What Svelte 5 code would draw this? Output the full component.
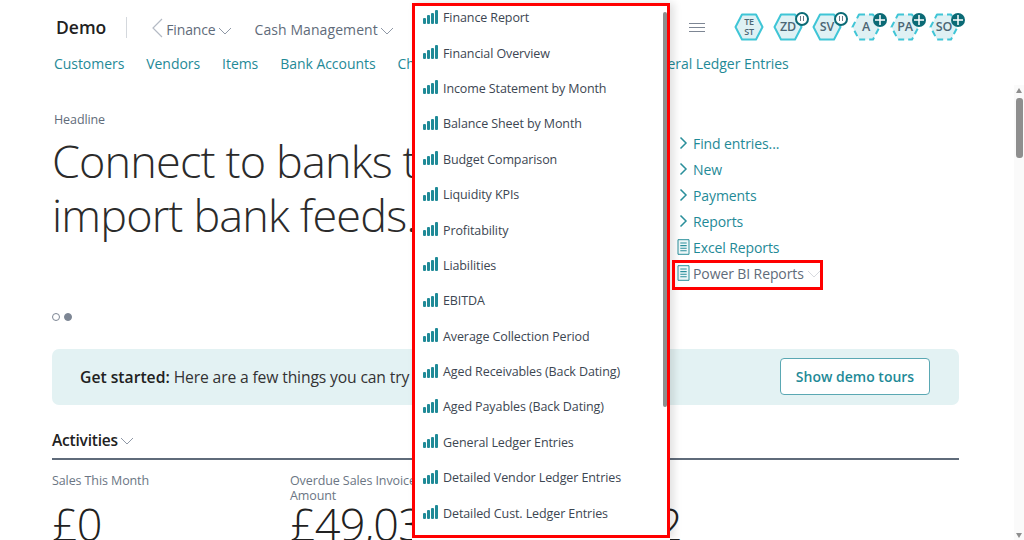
<script>
  const reports = [
    'Finance Report', 'Financial Overview', 'Income Statement by Month', 'Balance Sheet by Month',
    'Budget Comparison', 'Liquidity KPIs', 'Profitability', 'Liabilities', 'EBITDA',
    'Average Collection Period', 'Aged Receivables (Back Dating)', 'Aged Payables (Back Dating)',
    'General Ledger Entries', 'Detailed Vendor Ledger Entries', 'Detailed Cust. Ledger Entries'
  ];
  const links = ['Customers', 'Vendors', 'Items', 'Bank Accounts', 'Chart of Accounts', 'Cost Centres', 'General Ledger Entries'];
  const expanders = ['Find entries...', 'New', 'Payments', 'Reports'];
  const people = [
    { label: 'TE', label2: 'ST', kind: 'plain' },
    { label: 'ZD', kind: 'pause' },
    { label: 'SV', kind: 'pause' },
    { label: 'A', kind: 'add' },
    { label: 'PA', kind: 'add' },
    { label: 'SO', kind: 'add' }
  ];
</script>

{#snippet doc()}
  <svg class="doc" width="13" height="16" viewBox="0 0 13 16" aria-hidden="true">
    <path d="M1 .7h11v14.600H1z" fill="#eef7f8" stroke="#2a8f9b" />
    <path d="M3.300 4h6.400M3.300 6.600h6.400M3.300 9.200h6.400M3.300 11.800h6.400" stroke="#2a8f9b" stroke-width="1.100" />
  </svg>
{/snippet}

{#snippet chevron()}
  <svg class="chev" width="14" height="8" viewBox="0 0 14 8" aria-hidden="true">
    <path d="M1 1l6 6 6-6" fill="none" stroke="#8f98a6" />
  </svg>
{/snippet}

<div class="page">
  <header class="top">
    <span class="brand">Demo</span>
    <span class="divider"></span>
    <svg class="back" width="11" height="20" viewBox="0 0 11 20" aria-hidden="true">
      <path d="M10 1L1 10l9 9" fill="none" stroke="#b4bac4" stroke-width="1.200" />
    </svg>
    <span class="crumb first">Finance{@render chevron()}</span>
    <span class="crumb">Cash Management{@render chevron()}</span>
    <div class="top-right">
      <span class="burger"><i></i><i></i><i></i></span>
      <div class="people">
        {#each people as p}
          <div class="person">
            <svg width="30" height="28" viewBox="0 0 30 28" aria-hidden="true">
              <path class:dashed={p.kind === 'add'} d="M8 1.500h14l6.500 12.500-6.500 12.500H8L1.500 14z" fill="#dff1f4" stroke="#3fc5d6" stroke-width="2" stroke-linejoin="round" />
            </svg>
            {#if p.label2}
              <span class="initials small">{p.label}<br />{p.label2}</span>
            {:else}
              <span class="initials">{p.label}</span>
            {/if}
            {#if p.kind === 'pause'}
              <span class="badge pause"><i></i><i></i></span>
            {:else if p.kind === 'add'}
              <span class="badge add">
                <svg width="10" height="10" viewBox="0 0 10 10" aria-hidden="true"><path d="M5 0v10M0 5h10" stroke="#fff" stroke-width="1.500" /></svg>
              </span>
            {/if}
          </div>
        {/each}
      </div>
    </div>
  </header>

  <nav class="links">
    {#each links as link}<a href="#top">{link}</a>{/each}
  </nav>

  <section class="hero">
    <div class="headline">
      <div class="eyebrow">Headline</div>
      <h1>Connect to banks to<br />import bank feeds.</h1>
      <div class="dots"><i></i><i class="on"></i></div>
    </div>
    <ul class="actions">
      {#each expanders as item}
        <li>
          <svg class="arrow" width="13" height="14" viewBox="0 0 13 14" aria-hidden="true">
            <path d="M3.500 1.500L9 7l-5.500 5.500" fill="none" stroke="#2a8f9b" stroke-width="1.500" />
          </svg>
          {item}
        </li>
      {/each}
      <li>{@render doc()}Excel Reports</li>
      <li class="current">{@render doc()}Power BI Reports<span class="pale">{@render chevron()}</span></li>
    </ul>
  </section>

  <section class="banner">
    <p><b>Get started:</b> Here are a few things you can try out</p>
    <button>Show demo tours</button>
  </section>

  <section class="activities">
    <h2>Activities{@render chevron()}</h2>
    <div class="cues">
      <div class="cue"><div class="cue-label">Sales This Month</div><div class="cue-value">£0</div></div>
      <div class="cue"><div class="cue-label">Overdue Sales Invoice<br />Amount</div><div class="cue-value">£49,032</div></div>
      <div class="cue"><div class="cue-label">Purchases This Month</div><div class="cue-value">£21,432</div></div>
    </div>
  </section>

  <div class="menu">
    <ul>
      {#each reports as name}
        <li>
          <svg width="16" height="14" viewBox="0 0 16 14" aria-hidden="true">
            <rect x="0" y="8" width="3" height="6" rx="1" />
            <rect x="4" y="5" width="3" height="9" rx="1" />
            <rect x="8" y="3" width="3" height="11" rx="1" />
            <rect x="12" y="0" width="3" height="14" rx="1" />
          </svg>
          {name}
        </li>
      {/each}
    </ul>
    <span class="menu-thumb"></span>
  </div>

  <span class="callout"></span>

  <div class="scrollbar">
    <span class="up"></span>
    <span class="thumb"></span>
    <span class="down"></span>
  </div>
</div>

<style>
  :global(body) {
    margin: 0;
    background: #fff;
  }

  .page {
    position: relative;
    width: 1024px;
    height: 540px;
    overflow: hidden;
    font-family: "Open Sans", "Noto Sans", sans-serif;
    color: #212121;
  }

  .top {
    display: flex;
    align-items: center;
    height: 54px;
    padding-left: 56px;
    box-sizing: border-box;
  }

  .brand {
    font-size: 17.500px;
    font-weight: 600;
    letter-spacing: 0;
  }

  .divider {
    width: 1px;
    height: 21px;
    margin: 0 25px 0 20px;
    background: #d4d8dd;
  }

  .back {
    margin-top: 2px;
    margin-right: 3px;
  }

  .crumb {
    display: flex;
    align-items: center;
    gap: 2px;
    margin-top: 5px;
    font-size: 14px;
    letter-spacing: 0.08px;
    color: #5f6b7a;
  }

  .crumb.first {
    margin-right: 23px;
    letter-spacing: -0.15px;
  }

  .chev {
    margin-top: 2px;
    flex: none;
  }

  .top-right {
    display: flex;
    align-items: center;
    margin-left: auto;
    padding-right: 65px;
  }

  .burger {
    display: flex;
    flex-direction: column;
    gap: 3px;
    margin-right: 29px;
    margin-top: 1px;
  }

  .burger i {
    display: block;
    width: 16px;
    height: 1px;
    background: #7d8694;
  }

  .people {
    display: flex;
    gap: 9px;
    margin-top: -1px;
  }

  .person {
    position: relative;
    width: 30px;
    height: 28px;
  }

  .person > svg {
    display: block;
  }

  .dashed {
    stroke-dasharray: 6 4;
  }

  .initials {
    position: absolute;
    inset: 0;
    display: flex;
    align-items: center;
    justify-content: center;
    text-align: center;
    font-size: 12.500px;
    font-weight: 600;
    letter-spacing: -0.2px;
    color: #4b6674;
  }

  .initials.small {
    font-size: 9px;
    line-height: 10px;
  }

  .badge {
    position: absolute;
    top: 0;
    right: -6px;
    width: 14px;
    height: 14px;
    border-radius: 50%;
    display: flex;
    align-items: center;
    justify-content: center;
    box-sizing: border-box;
  }

  .badge.add {
    background: #0b6a75;
  }

  .badge.pause {
    top: -1px;
    gap: 2px;
    background: #fff;
    border: 2px solid #0b6a75;
  }

  .badge.pause i {
    width: 1px;
    height: 5px;
    background: #6b7684;
  }

  .links {
    display: flex;
    gap: 22px;
    padding-left: 54px;
    height: 22px;
    margin-top: -1px;
    font-size: 14px;
    line-height: 22px;
    letter-spacing: -0.05px;
    white-space: nowrap;
  }

  .links a {
    color: #1f8a97;
    text-decoration: none;
  }

  .links a:nth-child(6) {
    margin-right: 2px;
  }

  .hero {
    display: flex;
    padding-left: 52px;
    margin-top: 37px;
    height: 237px;
  }

  .headline {
    width: 625px;
    flex: none;
  }

  .eyebrow {
    font-size: 12.500px;
    line-height: 16px;
    letter-spacing: -0.1px;
    color: #5f6b7a;
    margin-left: 2px;
  }

  h1 {
    margin: 6px 0 0;
    font-size: 45px;
    line-height: 54px;
    font-weight: 300;
    letter-spacing: -0.85px;
    white-space: nowrap;
    color: #2b2b2b;
  }

  .dots {
    display: flex;
    gap: 4px;
    margin-top: 71px;
  }

  .dots i {
    width: 8px;
    height: 8px;
    border-radius: 50%;
    box-sizing: border-box;
    border: 1px solid #7d8694;
  }

  .dots i.on {
    background: #7d8694;
  }

  .actions {
    list-style: none;
    margin: 18px 0 0;
    padding: 0;
    font-size: 14px;
    letter-spacing: -0.1px;
    color: #1f8a97;
  }

  .actions li {
    display: flex;
    align-items: center;
    gap: 3px;
    height: 26px;
    white-space: nowrap;
  }

  .doc,
  .arrow {
    flex: none;
  }

  .current {
    color: #5f6b7a;
  }

  .pale {
    display: flex;
    opacity: 0.35;
  }

  .banner {
    display: flex;
    align-items: center;
    justify-content: space-between;
    box-sizing: border-box;
    width: 907px;
    height: 56px;
    margin-left: 52px;
    padding: 0 29px 0 28px;
    border-radius: 7px;
    background: #e3f2f3;
  }

  .banner p {
    margin: 0;
    font-size: 15.700px;
    letter-spacing: -0.15px;
    color: #333;
    white-space: nowrap;
  }

  .banner b {
    font-weight: 600;
    letter-spacing: 0;
    color: #212121;
  }

  button {
    flex: none;
    width: 150px;
    height: 37px;
    margin-bottom: 2px;
    padding: 0;
    border: 1px solid #5aa8b3;
    border-radius: 4px;
    background: #fff;
    font: 600 14px "Open Sans", "Noto Sans", sans-serif;
    letter-spacing: 0;
    color: #1f8a97;
  }

  .activities {
    margin: 24px 65px 0 52px;
  }

  h2 {
    display: flex;
    align-items: center;
    gap: 2px;
    box-sizing: border-box;
    height: 31px;
    margin: 0;
    padding-bottom: 7px;
    border-bottom: 2px solid #5f6b7a;
    font-size: 15.500px;
    font-weight: 600;
    letter-spacing: -0.2px;
  }

  .cues {
    display: flex;
    padding-top: 13px;
  }

  .cue {
    width: 238px;
    flex: none;
  }

  .cue:nth-child(2) {
    width: 234px;
  }

  .cue-label {
    height: 30px;
    font-size: 12.500px;
    line-height: 15px;
    letter-spacing: -0.1px;
    color: #6b7684;
    white-space: nowrap;
  }

  .cue-value {
    font-size: 45px;
    line-height: 54px;
    font-weight: 300;
    letter-spacing: -0.85px;
    margin-top: -6px;
  }

  /* open report dropdown, over the page; the white shadow is the rest of the menu below the frame */
  .menu {
    position: absolute;
    left: 412px;
    top: 3px;
    width: 258px;
    height: 535px;
    box-sizing: border-box;
    background: #fff;
    border: 3px solid #f00;
    box-shadow: 0 3px 0 #fff, 4px 0 8px rgba(0, 0, 0, 0.12);
  }

  .menu ul {
    list-style: none;
    margin: 0;
    padding: 0 0 0 8px;
    font-size: 12.500px;
    letter-spacing: -0.1px;
    color: #3c4652;
  }

  .menu li {
    display: flex;
    align-items: center;
    gap: 4px;
    height: 35.400px;
    white-space: nowrap;
  }

  .menu li svg {
    fill: #1f8a97;
    margin-top: -2px;
  }

  .menu li:first-child {
    margin-top: -6px;
  }

  .menu-thumb {
    position: absolute;
    right: 0;
    top: 6px;
    width: 4px;
    height: 395px;
    border-radius: 2px;
    background: #8e8e8e;
  }

  /* annotation round the Power BI action */
  .callout {
    position: absolute;
    left: 672px;
    top: 260px;
    width: 151px;
    height: 30px;
    box-sizing: border-box;
    border: 3px solid #f00;
  }

  .scrollbar {
    position: absolute;
    right: 0;
    top: 85px;
    width: 10px;
    height: 455px;
    background: #fafafa;
    display: flex;
    flex-direction: column;
    align-items: center;
  }

  .up {
    margin-top: 3px;
    border: 3.500px solid transparent;
    border-top: 0;
    border-bottom: 5px solid #8e8e8e;
  }

  .thumb {
    width: 7px;
    height: 60px;
    margin-top: 5px;
    border-radius: 3px;
    background: #8e8e8e;
  }

  .down {
    margin-top: auto;
    margin-bottom: 2px;
    border: 3.500px solid transparent;
    border-bottom: 0;
    border-top: 5px solid #8e8e8e;
  }
</style>
